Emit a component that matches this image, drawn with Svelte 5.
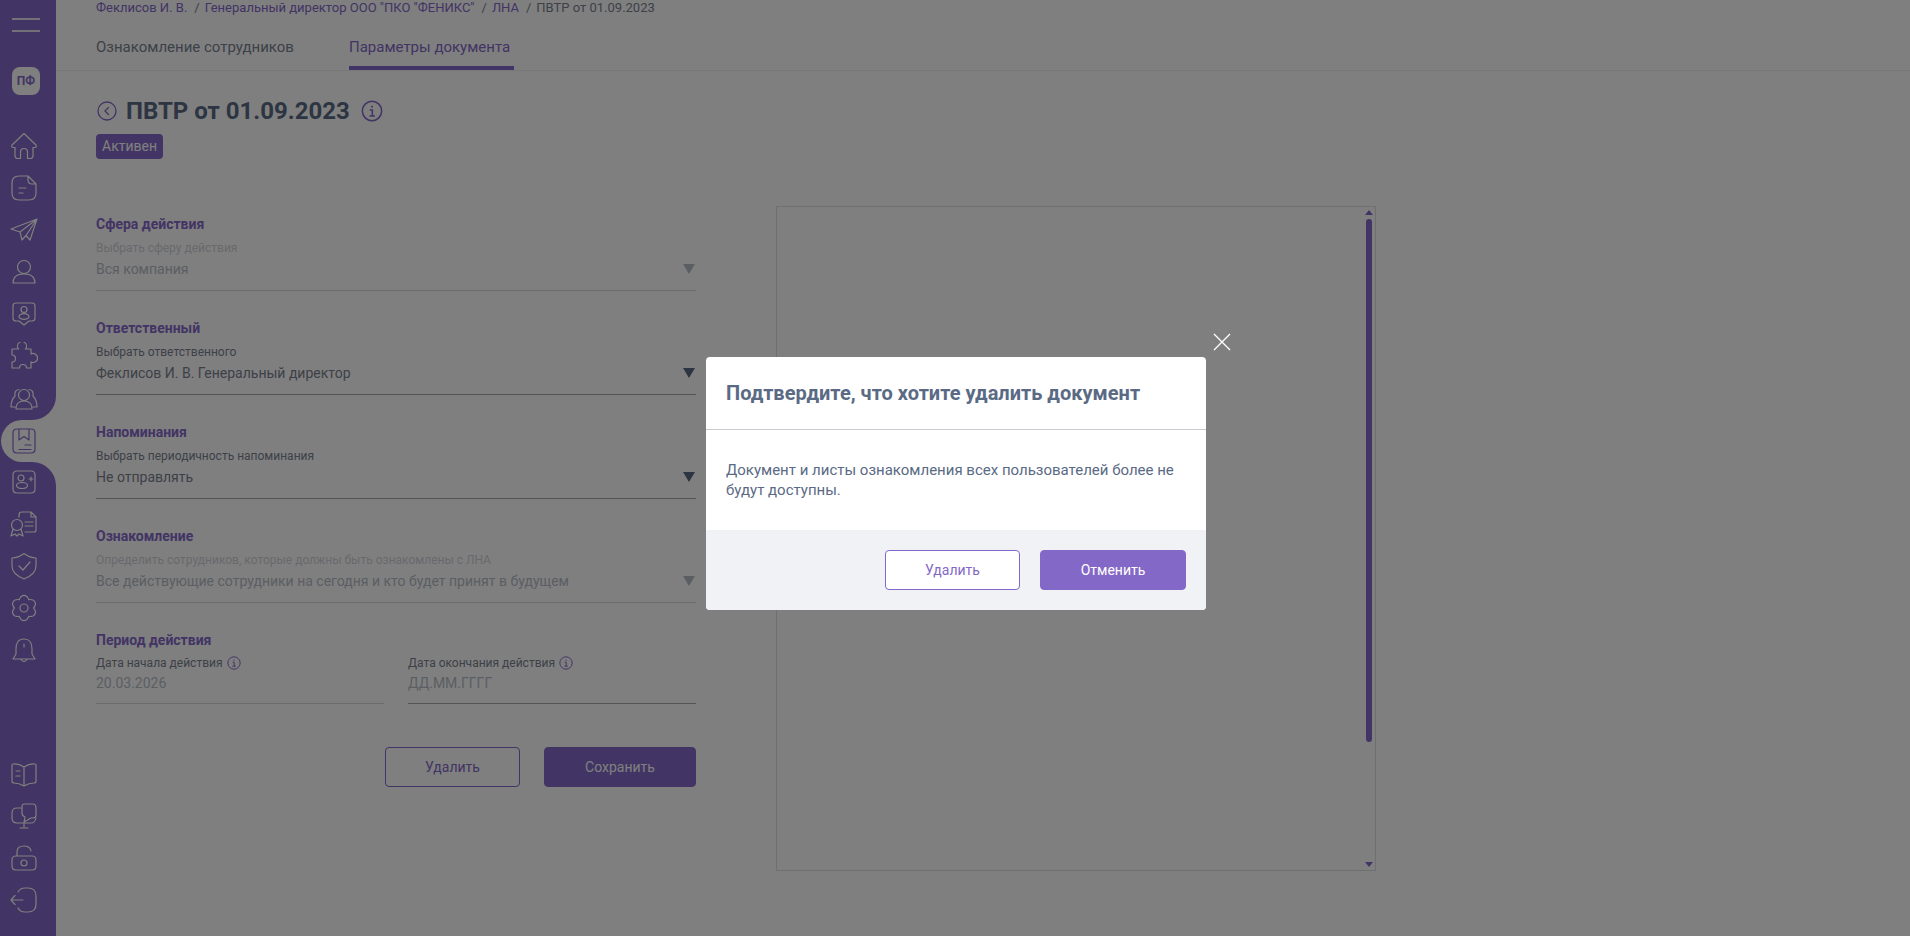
<script>
  const pt = (r, deg) => {
    const a = (deg * Math.PI) / 180;
    return `${(14 + r * Math.cos(a)).toFixed(2)} ${(14 + r * Math.sin(a)).toFixed(2)}`;
  };

  let gear = `M${pt(9.5, -120)}`;
  for (let i = 0; i < 6; i++) {
    const a = i * 60 - 90;
    gear += `Q${pt(11, a - 24)} ${pt(12, a - 12)}Q${pt(13.6, a)} ${pt(12, a + 12)}Q${pt(11, a + 24)} ${pt(9.5, a + 30)}`;
  }
  gear += 'Z M18 14A4 4 0 1 1 10 14A4 4 0 1 1 18 14Z';

  const icons = {
    home: 'M14 1.5L2 13Q1 15 3 15.5H5V24Q5 26.5 8 26.5H10.5V20Q10.5 16.5 14 16.5Q17.5 16.5 17.5 20V26.5H20Q23 26.5 23 24V15.5H25Q27 15 26 13Z',
    note: 'M18 2H9Q2 2 2 9V19Q2 26 9 26H19Q26 26 26 19V10ZM18 2V6Q18 10 22 10H26M9 14H16M9 19H13',
    plane: 'M27 3L1 13L10 16L12 24L16 19.5L20 24ZM27 3L10 16M27 3L16 19.5',
    person: 'M20.5 9A6.5 6.5 0 1 1 7.5 9A6.5 6.5 0 1 1 20.5 9ZM3 25Q3 16 14 16Q25 16 25 25Z',
    badge: 'M6 3H22Q25 3 25 6V18Q25 21 22 21H19L14 25L9 21H6Q3 21 3 18V6Q3 3 6 3ZM17 9.5A3 3 0 1 1 11 9.5A3 3 0 1 1 17 9.5ZM19 16.5A5 2.8 0 1 1 9 16.5A5 2.8 0 1 1 19 16.5Z',
    puzzle: 'M2 7H8.5A4.5 4.5 0 1 1 15.5 7H21V12A4.5 4.5 0 1 1 21 20V26H16.5A3.5 3.5 0 0 0 9.5 26H2V20A3.5 3.5 0 0 0 2 13Z',
    people: 'M19.5 11A5.5 5.5 0 1 1 8.5 11A5.5 5.5 0 1 1 19.5 11ZM6 25Q6 17 14 17Q22 17 22 25ZM9 5.5Q4 6 5 12Q1 16 1 23H6M19 5.5Q24 6 23 12Q27 16 27 23H22',
    book: 'M7 2H21Q25 2 25 6V22Q25 26 21 26H7Q3 26 3 22V6Q3 2 7 2ZM9 2V13L14 9.5L19 13V2M15 18H21M9 22.5H21',
    addperson: 'M7 3H21Q25 3 25 7V21Q25 25 21 25H7Q3 25 3 21V7Q3 3 7 3ZM14 10A3 3 0 1 1 8 10A3 3 0 1 1 14 10ZM17.5 17.5A5.5 3 0 1 1 6.5 17.5A5.5 3 0 1 1 17.5 17.5ZM19 11H23M21 9V13',
    cert: 'M9 7V5Q9 2 12 2H21L26 7V20Q26 22 24 22H15M21 2V7H26M15 12H23M15 16H23M12.5 15A5.5 5.5 0 1 1 1.5 15A5.5 5.5 0 1 1 12.5 15ZM3 19L1 26L5 24L7 26L9 24L13 26L11 19',
    shield: 'M14 1.5Q20 6 26 6V14Q26 22 14 27Q2 22 2 14V6Q8 6 14 1.5ZM9 14L13 18L20 10',
    gear,
    bell: 'M14 3Q22 3 22 13V18L25 23H3L6 18V13Q6 3 14 3ZM14 8V11M11 23.5Q14 27.5 17 23.5',
    manual: 'M14 7Q8 3 3 4Q2 4 2 6V21Q2 23 4 23Q9 23 14 26Q19 23 24 23Q26 23 26 21V6Q26 4 25 4Q20 3 14 7ZM14 7V26M6 11H10M6 16H10',
    support: 'M14 2H23Q26 2 26 6V13Q26 16 23 16H21L14 20L15 15Q12 14 12 11V5Q12 2 14 2ZM11 6H7Q2 6 2 11V16Q2 21 7 21H21Q25 21 26 16M14 21V26M10 26H18',
    lock: 'M6 12H22Q26 12 26 16V22Q26 26 22 26H6Q2 26 2 22V16Q2 12 6 12ZM17 19A3 3 0 1 1 11 19A3 3 0 1 1 17 19ZM7 12V8Q7 2 14 2Q20 2 21 7',
    exit: 'M13 14H1M5 9.5L1 14L5 18.5M8 6Q10 2 15 2H18Q26 2 26 10V18Q26 26 18 26H15Q10 26 8 22'
  };

  const topNav = ['home', 'note', 'plane', 'person', 'badge', 'puzzle', 'people'];
  const midNav = ['addperson', 'cert', 'shield', 'gear', 'bell'];
  const endNav = ['manual', 'support', 'lock', 'exit'];

  const crumbs = ['Феклисов И. В.', 'Генеральный директор ООО "ПКО "ФЕНИКС"', 'ЛНА'];

  const fields = [
    { title: 'Сфера действия', hint: 'Выбрать сферу действия', value: 'Вся компания', off: true },
    { title: 'Ответственный', hint: 'Выбрать ответственного', value: 'Феклисов И. В. Генеральный директор', off: false },
    { title: 'Напоминания', hint: 'Выбрать периодичность напоминания', value: 'Не отправлять', off: false },
    { title: 'Ознакомление', hint: 'Определить сотрудников, которые должны быть ознакомлены с ЛНА', value: 'Все действующие сотрудники на сегодня и кто будет принят в будущем', off: true }
  ];
</script>

{#snippet navIcon(name)}
  <div class="nav-item">
    <svg width="28" height="28" viewBox="0 0 28 28" fill="none" stroke="currentColor" stroke-width="1.2" stroke-linejoin="round" stroke-linecap="round"><path d={icons[name]} /></svg>
  </div>
{/snippet}

{#snippet info(size)}
  <svg class="info" width={size} height={size} viewBox="0 0 20 20" fill="none" stroke="currentColor" stroke-width="1.4"><circle cx="10" cy="10" r="8.8" /><path d="M8 9H10.3V14.5M7.7 14.5H12.6" /><path d="M9.2 5.2H10.8V6.9H9.2Z" fill="currentColor" stroke="none" /></svg>
{/snippet}

<div class="app">
  <aside class="sidebar">
    <div class="side-top">
      <div class="burger"><span></span><span></span></div>
      <div class="initials">ПФ</div>
      {#each topNav as name}
        {@render navIcon(name)}
      {/each}
    </div>
    <div class="side-active">
      <div class="active-tab">{@render navIcon('book')}</div>
    </div>
    <div class="side-bottom">
      <div class="mid-nav">
        {#each midNav as name}
          {@render navIcon(name)}
        {/each}
      </div>
      <div class="spacer"></div>
      {#each endNav as name}
        {@render navIcon(name)}
      {/each}
    </div>
  </aside>

  <main class="main">
    <header class="top">
      <nav class="crumbs">
        {#each crumbs as c}
          <span class="crumb">{c}</span><span class="sep">/</span>
        {/each}
        <span class="crumb-last">ПВТР от 01.09.2023</span>
      </nav>
      <div class="tabs">
        <div class="tab">Ознакомление сотрудников</div>
        <div class="tab active">Параметры документа</div>
      </div>
    </header>

    <div class="content">
      <div class="title-row">
        <svg class="back" width="20" height="20" viewBox="0 0 20 20" fill="none" stroke="currentColor" stroke-width="1.3"><circle cx="10" cy="10" r="9" /><path d="M11.5 6.5L8 10L11.5 13.5" stroke-linecap="round" /></svg>
        <h1>ПВТР от 01.09.2023</h1>
        {@render info(22)}
      </div>
      <div class="status">Активен</div>

      <div class="columns">
        <form class="form">
          {#each fields as f}
            <div class="field" class:off={f.off}>
              <div class="label">{f.title}</div>
              <div class="hint">{f.hint}</div>
              <div class="select">
                <span>{f.value}</span>
                <i class="caret"></i>
              </div>
            </div>
          {/each}
          <div class="period">
            <div class="label">Период действия</div>
            <div class="dates">
              <div class="date">
                <div class="date-hint">Дата начала действия {@render info(14)}</div>
                <div class="date-value">20.03.2026</div>
              </div>
              <div class="date">
                <div class="date-hint">Дата окончания действия {@render info(14)}</div>
                <div class="date-value">ДД.ММ.ГГГГ</div>
              </div>
            </div>
          </div>
          <div class="actions">
            <div class="btn outline">Удалить</div>
            <div class="btn solid save">Сохранить</div>
          </div>
        </form>

        <div class="preview">
          <div class="scroll">
            <i class="arrow up"></i>
            <div class="thumb"></div>
            <i class="arrow down"></i>
          </div>
        </div>
      </div>
    </div>
  </main>

  <div class="overlay">
    <div class="modal">
      <svg class="close" width="18" height="18" viewBox="0 0 18 18" stroke="#fff" stroke-width="1.3"><path d="M1 1L17 17M17 1L1 17" /></svg>
      <div class="modal-head">Подтвердите, что хотите удалить документ</div>
      <div class="modal-body">Документ и листы ознакомления всех пользователей более не будут доступны.</div>
      <div class="modal-foot">
        <div class="btn outline">Удалить</div>
        <div class="btn solid cancel">Отменить</div>
      </div>
    </div>
  </div>
</div>

<style>
  :global(body) {
    background: #fff;
    font-family: Roboto, "Liberation Sans", sans-serif;
  }

  .app {
    display: flex;
    height: 936px;
    overflow: hidden;
    color: #5a6a84;
  }

  /* sidebar */
  .sidebar {
    width: 56px;
    flex: none;
    display: flex;
    flex-direction: column;
    color: #fff;
  }
  .side-top {
    height: 420px;
    box-sizing: border-box;
    background: #8468c8;
    border-bottom-right-radius: 24px;
    padding-top: 18px;
  }
  .burger {
    width: 28px;
    height: 14px;
    margin-left: 12px;
    display: flex;
    flex-direction: column;
    justify-content: space-between;
  }
  .burger span {
    height: 2px;
    background: #fff;
    opacity: 0.8;
  }
  .initials {
    width: 28px;
    height: 28px;
    margin: 35px 0 30px 12px;
    border-radius: 8px;
    background: #fff;
    color: #8468c8;
    font-size: 12px;
    font-weight: 700;
    line-height: 28px;
    text-align: center;
  }
  .nav-item {
    height: 42px;
    padding-left: 10px;
    display: flex;
    align-items: center;
  }
  .side-active {
    height: 42px;
    background: #8468c8;
  }
  .active-tab {
    height: 42px;
    margin-left: 1px;
    margin-right: -1px;
    background: #fff;
    border-radius: 21px 0 0 21px;
    color: #8468c8;
  }
  .active-tab .nav-item {
    padding-left: 9px;
  }
  .side-bottom {
    flex: 1;
    background: #8468c8;
    border-top-right-radius: 24px;
    padding-bottom: 15px;
    display: flex;
    flex-direction: column;
  }
  .mid-nav {
    margin-top: -1px;
  }
  .spacer {
    flex: 1;
  }

  /* header */
  .main {
    flex: 1;
    min-width: 0;
  }
  .top {
    height: 70px;
    border-bottom: 1px solid #eceef2;
    padding-left: 40px;
  }
  .crumbs {
    display: flex;
    align-items: center;
    height: 15px;
    font-size: 13px;
    color: #8468c8;
  }
  .sep {
    margin: 0 5px 0 7px;
    color: #7a828f;
  }
  .crumb-last {
    color: #7a828f;
  }
  .tabs {
    display: flex;
    margin-top: 22px;
    gap: 55px;
    font-size: 15px;
    color: #7a828f;
  }
  .tab {
    box-sizing: border-box;
    height: 33px;
    line-height: 20px;
  }
  .tab.active {
    color: #8468c8;
    padding-right: 4px;
    border-bottom: 4px solid #8468c8;
  }

  /* content */
  .content {
    padding-left: 40px;
  }
  .title-row {
    display: flex;
    align-items: center;
    height: 28px;
    margin-top: 26px;
  }
  .back {
    color: #8468c8;
    margin: 0 9px 0 1px;
  }
  h1 {
    margin: 0 11px 0 0;
    font-size: 24px;
    font-weight: 700;
    line-height: 28px;
  }
  .info {
    color: #8468c8;
    flex: none;
  }
  .status {
    width: fit-content;
    height: 25px;
    margin-top: 9px;
    padding: 0 6px;
    border-radius: 4px;
    background: #8468c8;
    color: #fff;
    font-size: 14px;
    line-height: 25px;
  }

  .columns {
    display: flex;
    gap: 80px;
    margin-top: 47px;
  }

  /* form */
  .form {
    width: 600px;
    padding-top: 8px;
  }
  .field {
    height: 104px;
  }
  .label {
    font-size: 14px;
    font-weight: 700;
    line-height: 20px;
    color: #8468c8;
  }
  .hint {
    margin-top: 6px;
    height: 16px;
    font-size: 12px;
    line-height: 16px;
    color: #7a828f;
  }
  .select {
    display: flex;
    align-items: center;
    justify-content: space-between;
    height: 32px;
    box-sizing: border-box;
    padding: 0 1px 11px 0;
    margin-top: 3px;
    border-bottom: 1px solid #a8a8a8;
    font-size: 14px;
    color: #7a828f;
  }
  .caret {
    width: 0;
    height: 0;
    border-left: 6px solid transparent;
    border-right: 6px solid transparent;
    border-top: 10px solid #5a6a84;
  }
  .field.off .hint {
    color: #d0d3da;
  }
  .field.off .select {
    color: #b6bcc6;
    border-color: #d8d8d8;
  }
  .field.off .caret {
    border-top-color: #b6bcc6;
  }
  .dates {
    display: flex;
    gap: 24px;
    margin-top: 5px;
  }
  .date {
    flex: 1;
    height: 49px;
    box-sizing: border-box;
    border-bottom: 1px solid #d8d8d8;
  }
  .date:last-child {
    border-bottom-color: #a8a8a8;
  }
  .date-hint {
    display: flex;
    align-items: center;
    gap: 4px;
    height: 16px;
    font-size: 12px;
    color: #7a828f;
  }
  .date-value {
    margin-top: 2px;
    font-size: 14px;
    line-height: 20px;
    color: #b6bcc6;
  }
  .actions {
    display: flex;
    justify-content: flex-end;
    gap: 24px;
    margin-top: 43px;
  }

  .btn {
    box-sizing: border-box;
    height: 40px;
    border-radius: 4px;
    font-size: 14px;
    line-height: 38px;
    text-align: center;
  }
  .outline {
    width: 135px;
    background: #fff;
    border: 1px solid #8468c8;
    color: #8468c8;
  }
  .solid {
    background: #8468c8;
    border: 1px solid #8468c8;
    color: #fff;
  }
  .save {
    width: 152px;
  }
  .cancel {
    width: 146px;
  }

  /* document preview */
  .preview {
    box-sizing: border-box;
    width: 600px;
    height: 665px;
    border: 1px solid #dcdee2;
    display: flex;
    justify-content: flex-end;
  }
  .scroll {
    width: 12px;
    padding-top: 3px;
    display: flex;
    flex-direction: column;
    align-items: center;
  }
  .thumb {
    width: 6px;
    height: 523px;
    margin-top: 4px;
    border-radius: 3px;
    background: #8468c8;
  }
  .arrow {
    width: 0;
    height: 0;
    border-left: 4px solid transparent;
    border-right: 4px solid transparent;
  }
  .arrow.up {
    border-bottom: 5px solid #8468c8;
  }
  .arrow.down {
    margin-top: 120px;
    border-top: 5px solid #8468c8;
  }

  /* modal */
  .overlay {
    position: fixed;
    inset: 0;
    background: rgba(0, 0, 0, 0.5);
    display: flex;
    justify-content: center;
    align-items: flex-start;
    padding: 357px 0 0 2px;
    box-sizing: border-box;
  }
  .modal {
    position: relative;
    width: 500px;
    background: #fff;
    border-radius: 4px;
  }
  .close {
    position: absolute;
    top: -24px;
    right: -25px;
  }
  .modal-head {
    height: 72px;
    padding: 0 20px;
    border-bottom: 1px solid #c9cbd0;
    font-size: 20px;
    font-weight: 700;
    line-height: 72px;
  }
  .modal-body {
    height: 100px;
    box-sizing: border-box;
    padding: 30px 20px;
    font-size: 15px;
    line-height: 20px;
  }
  .modal-foot {
    display: flex;
    justify-content: flex-end;
    gap: 20px;
    padding: 20px;
    background: #f1f2f6;
    border-radius: 0 0 4px 4px;
  }
</style>
